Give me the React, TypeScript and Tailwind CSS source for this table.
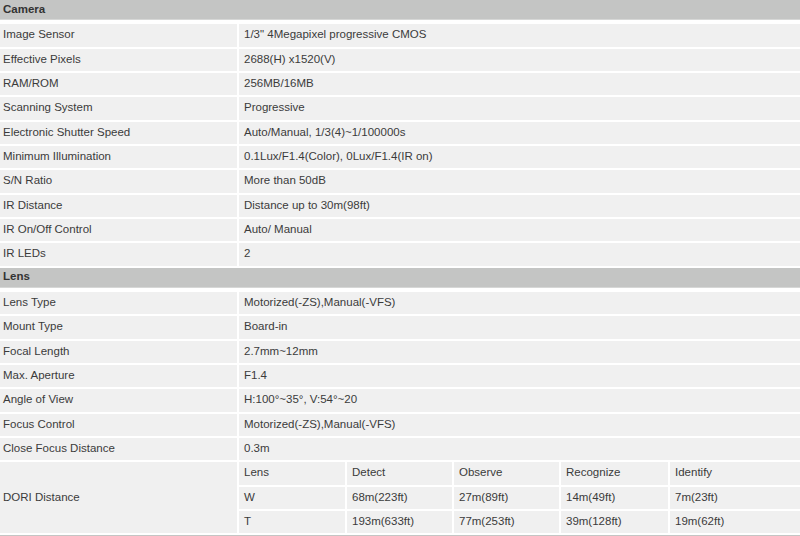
import React from 'react'

const camera = [
  ['Image Sensor', '1/3" 4Megapixel progressive CMOS'],
  ['Effective Pixels', '2688(H) x1520(V)'],
  ['RAM/ROM', '256MB/16MB'],
  ['Scanning System', 'Progressive'],
  ['Electronic Shutter Speed', 'Auto/Manual, 1/3(4)~1/100000s'],
  ['Minimum Illumination', '0.1Lux/F1.4(Color), 0Lux/F1.4(IR on)'],
  ['S/N Ratio', 'More than 50dB'],
  ['IR Distance', 'Distance up to 30m(98ft)'],
  ['IR On/Off Control', 'Auto/ Manual'],
  ['IR LEDs', '2'],
]

const lens = [
  ['Lens Type', 'Motorized(-ZS),Manual(-VFS)'],
  ['Mount Type', 'Board-in'],
  ['Focal Length', '2.7mm~12mm'],
  ['Max. Aperture', 'F1.4'],
  ['Angle of View', 'H:100°~35°, V:54°~20'],
  ['Focus Control', 'Motorized(-ZS),Manual(-VFS)'],
  ['Close Focus Distance', '0.3m'],
]

const dori = [
  ['Lens', 'Detect', 'Observe', 'Recognize', 'Identify'],
  ['W', '68m(223ft)', '27m(89ft)', '14m(49ft)', '7m(23ft)'],
  ['T', '193m(633ft)', '77m(253ft)', '39m(128ft)', '19m(62ft)'],
]

const Header = ({ title }: { title: string }) => (
  <div className="flex h-[22.33px] shrink-0 items-start bg-white">
    <div className="flex h-[20px] w-full items-center border-b border-[#d6d7d6] bg-[#c4c5c4] pl-[3px] text-[11.5px] font-bold text-[#333]">
      {title}
    </div>
  </div>
)

const Row = ({ label, value }: { label: string; value: string }) => (
  <div className="grid h-[22.33px] shrink-0 grid-cols-[237px_1fr] gap-[2px]">
    <div className="flex items-center bg-[#f0f0f0] pb-[1px] pl-[3px]">{label}</div>
    <div className="flex items-center bg-[#f0f0f0] pb-[1px] pl-[5px]">{value}</div>
  </div>
)

export default function App() {
  return (
    <div
      className="flex h-[536px] w-[800px] flex-col gap-[2px] overflow-hidden bg-white text-[11.5px] text-[#3b3b3b]"
      style={{ fontFamily: '"Liberation Sans", Arial, sans-serif' }}
    >
      <Header title="Camera" />
      {camera.map(([l, v]) => (
        <Row key={l} label={l} value={v} />
      ))}
      <Header title="Lens" />
      {lens.map(([l, v]) => (
        <Row key={l} label={l} value={v} />
      ))}
      <div className="grid shrink-0 grid-cols-[237px_1fr] gap-[2px]">
        <div className="flex items-center bg-[#f0f0f0] pb-[1px] pl-[3px]">DORI Distance</div>
        <div className="flex flex-col gap-[2px]">
          {dori.map((r) => (
            <div key={r[0]} className="grid h-[22.33px] grid-cols-[106px_105px_105px_107px_1fr] gap-[2px]">
              {r.map((c, i) => (
                <div key={i} className="flex items-center bg-[#f0f0f0] pb-[1px] pl-[5px]">
                  {c}
                </div>
              ))}
            </div>
          ))}
        </div>
      </div>
      <div className="h-[10px] shrink-0 bg-[#c4c5c4]" />
    </div>
  )
}
